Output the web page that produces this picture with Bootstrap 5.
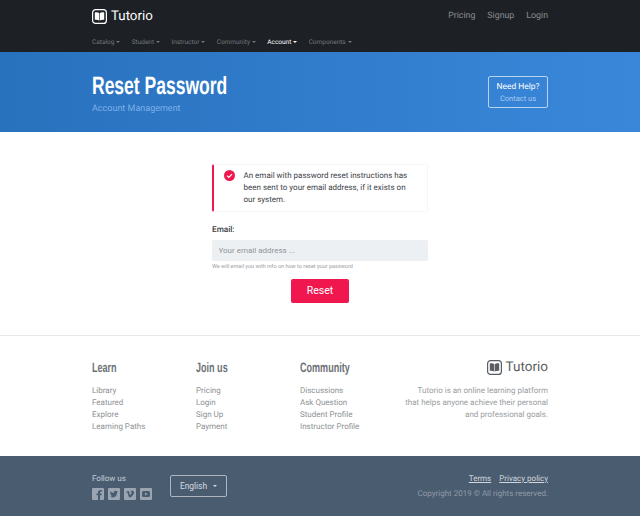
<!DOCTYPE html>
<html lang="en">
<head>
    <meta charset="UTF-8">
    <meta name="viewport" content="width=device-width, initial-scale=1.0">
    <title>Reset Password - Tutorio</title>
    <link href="https://cdn.jsdelivr.net/npm/bootstrap@5.3.0/dist/css/bootstrap.min.css" rel="stylesheet">
    <style>
        body {
            font-family: Roboto, "Liberation Sans", sans-serif;
            font-size: 8px;
            color: #383b3d;
            background: #fff;
            height: 516px;
            overflow: hidden;
            text-rendering: geometricPrecision;
        }

        .wrap {
            width: 456px;
            margin: 0 auto;
        }

        .top-dark {
            background: #1d2126;
            height: 52px;
        }

        .brand-row {
            height: 32px;
            padding-top: 1px;
        }

        .brand-name {
            font-size: 13.3px;
            color: #fff;
            line-height: 1;
        }

        .brand-links {
            gap: 12px;
        }

        .brand-link {
            color: #8a8d90;
            font-size: 8.8px;
            text-decoration: none;
        }

        .menu-row {
            height: 20px;
            padding-top: 1px;
            gap: 11.3px;
        }

        .menu-link {
            color: #73777b;
            font-size: 6.5px;
            text-decoration: none;
        }

        .menu-link.on {
            color: #fff;
        }

        .caret-mini {
            display: inline-block;
            width: 0;
            height: 0;
            margin-left: 2px;
            vertical-align: 1px;
            border-top: 2px solid currentColor;
            border-left: 2px solid transparent;
            border-right: 2px solid transparent;
        }

        .hero {
            height: 80px;
            background: linear-gradient(90deg, #2871bd 0%, #3a87da 100%);
        }

        .hero-text {
            padding-top: 4px;
        }

        .hero-title {
            font-family: "Liberation Sans", sans-serif;
            font-size: 25px;
            font-weight: 700;
            color: #fff;
            line-height: 1;
            margin: 0 0 6px;
            transform: scaleX(.7);
            transform-origin: left center;
            white-space: nowrap;
        }

        .hero-sub {
            color: #7db0e6;
            font-size: 9px;
            line-height: 1;
        }

        .help-btn {
            width: 60px;
            height: 32px;
            border: 1px solid #b6d3f2;
            border-radius: 2px;
            color: #fff;
            font-size: 8.4px;
            line-height: 11px;
            padding: 1px 0 0;
            text-decoration: none;
        }

        .help-btn span {
            color: #a5c9f0;
            font-size: 7.5px;
        }

        .main-area {
            height: 203px;
            padding-top: 32px;
        }

        .form-box {
            width: 216px;
            margin: 0 auto;
        }

        .notice {
            height: 48px;
            border: 1px solid #f6f6f7;
            border-left: 2px solid #f0174f;
            border-radius: 2px;
            padding: 5px 12px 0 10px;
            gap: 8.5px;
            font-size: 8px;
            line-height: 12px;
            color: #3c4248;
        }

        .notice svg {
            flex: none;
        }

        .field-label {
            font-size: 8.2px;
            font-weight: 500;
            color: #383b3d;
            margin: 13px 0 4px;
            line-height: 11px;
        }

        .email-input.form-control {
            height: 21px;
            background: #edf0f2;
            border: 0;
            border-radius: 2px;
            font-size: 8px;
            padding: 0 6.5px;
            color: #383b3d;
        }

        .email-input::placeholder {
            color: #8f9499;
        }

        .hint {
            font-size: 5.5px;
            color: #9a9ea3;
            line-height: 7px;
            margin: 3px 0 8px;
        }

        .reset-btn.btn {
            display: block;
            width: 58px;
            height: 24px;
            margin: 0 auto;
            padding: 0;
            background: #f0174f;
            border: 0;
            border-radius: 2px;
            color: #fff;
            font-size: 10.5px;
        }

        .links-area {
            height: 121px;
            border-top: 1px solid #e6e8ea;
            padding-top: 24px;
        }

        .col-title {
            font-family: "Liberation Sans", sans-serif;
            font-size: 13.5px;
            font-weight: 700;
            color: #6c7176;
            line-height: 16px;
            margin: 0 0 9px;
            transform: scaleX(.67);
            transform-origin: left center;
            white-space: nowrap;
        }

        .col-a {
            width: 104px;
            flex: none;
        }

        .col-link {
            display: block;
            color: #8d9195;
            font-size: 8px;
            line-height: 12px;
            text-decoration: none;
        }

        .about-name {
            font-size: 13.5px;
            color: #5a5e62;
            line-height: 1;
        }

        .about-text {
            color: #9a9da1;
            font-size: 8px;
            line-height: 12px;
            text-align: right;
            margin: 10px 0 0;
        }

        .foot {
            height: 60px;
            background: #4a5c70;
        }

        .follow {
            color: #c5ccd4;
            font-size: 8px;
            line-height: 11px;
            margin-bottom: 4px;
        }

        .social-gap {
            gap: 4px;
        }

        .foot-left {
            gap: 18px;
        }

        .lang-btn {
            width: 57px;
            height: 22px;
            border: 1px solid #aeb6bf;
            border-radius: 2px;
            color: #d7dce1;
            font-size: 8.4px;
            background: transparent;
            padding: 0;
        }

        .lang-btn.dropdown-toggle::after {
            margin-left: 6px;
            border-top-width: 2.500px;
            border-left-width: 2.500px;
            border-right-width: 2.500px;
        }

        .foot-links {
            gap: 8px;
            margin-bottom: 4px;
        }

        .foot-link {
            color: #cfd5db;
            font-size: 8px;
            line-height: 11px;
            text-decoration: underline;
        }

        .copy {
            color: #8f9ba8;
            font-size: 8px;
            line-height: 11px;
        }
    </style>
</head>

<body>
    <!-- Header -->
    <div class="top-dark">
        <div class="wrap">
            <div class="brand-row d-flex align-items-center justify-content-between">
                <div class="d-flex align-items-center gap-1">
                    <svg width="15" height="15" viewBox="0 0 15 15">
                        <rect x=".6" y=".6" width="13.8" height="13.8" rx="3" fill="none" stroke="#fff" stroke-width="1.2"/>
                        <path d="M2.800 3.400c1.700-.3 3.500 0 4.400.8v7.400c-1-.8-2.700-1-4.400-.8zM12.200 3.400c-1.700-.3-3.500 0-4.400.8v7.400c1-.8 2.700-1 4.400-.8z" fill="#fff"/>
                    </svg>
                    <span class="brand-name">Tutorio</span>
                </div>
                <div class="brand-links d-flex">
                    <a class="brand-link" href="#">Pricing</a>
                    <a class="brand-link" href="#">Signup</a>
                    <a class="brand-link" href="#">Login</a>
                </div>
            </div>
            <div class="menu-row d-flex align-items-center">
                <a class="menu-link" href="#">Catalog<i class="caret-mini"></i></a>
                <a class="menu-link" href="#">Student<i class="caret-mini"></i></a>
                <a class="menu-link" href="#">Instructor<i class="caret-mini"></i></a>
                <a class="menu-link" href="#">Community<i class="caret-mini"></i></a>
                <a class="menu-link on" href="#">Account<i class="caret-mini"></i></a>
                <a class="menu-link" href="#">Components<i class="caret-mini"></i></a>
            </div>
        </div>
    </div>

    <!-- Page title -->
    <div class="hero">
        <div class="wrap h-100 d-flex align-items-center justify-content-between">
            <div class="hero-text">
                <h1 class="hero-title">Reset Password</h1>
                <div class="hero-sub">Account Management</div>
            </div>
            <a class="help-btn d-flex flex-column align-items-center justify-content-center" href="#">
                Need Help?
                <span>Contact us</span>
            </a>
        </div>
    </div>

    <!-- Form -->
    <div class="main-area">
        <form class="form-box">
            <div class="notice d-flex">
                <svg width="11" height="11" viewBox="0 0 11 11">
                    <circle cx="5.500" cy="5.500" r="5.500" fill="#f0174f"/>
                    <path d="M3 5.600l1.800 1.800L8 4.100" fill="none" stroke="#fff" stroke-width="1.200"/>
                </svg>
                <div>An email with password reset instructions has been sent to your email address, if it exists on our system.</div>
            </div>
            <div class="field-label">Email:</div>
            <input class="email-input form-control" type="text" placeholder="Your email address ...">
            <div class="hint">We will email you with info on how to reset your password</div>
            <button class="reset-btn btn" type="button">Reset</button>
        </form>
    </div>

    <!-- Footer links -->
    <div class="links-area">
        <div class="wrap d-flex">
            <div class="col-a">
                <h4 class="col-title">Learn</h4>
                <a class="col-link" href="#">Library</a>
                <a class="col-link" href="#">Featured</a>
                <a class="col-link" href="#">Explore</a>
                <a class="col-link" href="#">Learning Paths</a>
            </div>
            <div class="col-a">
                <h4 class="col-title">Join us</h4>
                <a class="col-link" href="#">Pricing</a>
                <a class="col-link" href="#">Login</a>
                <a class="col-link" href="#">Sign Up</a>
                <a class="col-link" href="#">Payment</a>
            </div>
            <div class="col-a">
                <h4 class="col-title">Community</h4>
                <a class="col-link" href="#">Discussions</a>
                <a class="col-link" href="#">Ask Question</a>
                <a class="col-link" href="#">Student Profile</a>
                <a class="col-link" href="#">Instructor Profile</a>
            </div>
            <div class="flex-grow-1">
                <div class="d-flex align-items-center justify-content-end gap-1">
                    <svg width="15" height="15" viewBox="0 0 15 15">
                        <rect x=".6" y=".6" width="13.8" height="13.8" rx="3" fill="none" stroke="#5a5e62" stroke-width="1.2"/>
                        <path d="M2.800 3.400c1.700-.3 3.500 0 4.400.8v7.400c-1-.8-2.700-1-4.400-.8zM12.200 3.400c-1.700-.3-3.500 0-4.400.8v7.400c1-.8 2.700-1 4.400-.8z" fill="#5a5e62"/>
                    </svg>
                    <span class="about-name">Tutorio</span>
                </div>
                <p class="about-text">Tutorio is an online learning platform that helps anyone achieve their personal and professional goals.</p>
            </div>
        </div>
    </div>

    <!-- Footer bar -->
    <div class="foot">
        <div class="wrap h-100 d-flex align-items-center justify-content-between">
            <div class="foot-left d-flex align-items-center">
                <div>
                    <div class="follow">Follow us</div>
                    <div class="social-gap d-flex">
                        <svg width="12" height="12" viewBox="0 0 12 12"><rect width="12" height="12" rx="1" fill="#9aa5b1"/><path d="M8 12V7.200h1.500L9.800 5.500H8V4.500c0-.5.2-.8.800-.8h1V2.100H8.500C7 2.100 6 3 6 4.400v1.100H4.500v1.700H6V12z" fill="#4a5c70"/></svg>
                        <svg width="12" height="12" viewBox="0 0 12 12"><rect width="12" height="12" rx="1" fill="#9aa5b1"/><path d="M10 3.600c-.3.100-.6.200-1 .3.400-.2.600-.6.800-1-.3.200-.7.300-1.100.4-.7-.8-2-.7-2.600.1-.3.400-.4 1-.3 1.500C4.400 4.800 3.200 4.200 2.400 3.200c-.4.800-.2 1.700.5 2.200-.3 0-.5-.1-.7-.2 0 .8.600 1.500 1.300 1.700-.2.100-.5.100-.7 0 .2.700.8 1.100 1.500 1.200-.7.500-1.500.8-2.400.7 2.600 1.600 6 .3 6.900-2.600.1-.5.200-1 .2-1.500.4-.1.700-.5 1-.9z" fill="#4a5c70"/></svg>
                        <svg width="12" height="12" viewBox="0 0 12 12"><rect width="12" height="12" rx="1" fill="#9aa5b1"/><path d="M2 4.300l.5.600c.5-.3.800-.5 1-.2.400.6.800 3.300 1.500 4.300.7.900 1.600.500 2.700-.5 1-.9 2.400-2.600 2.500-4.200C9.800 2.500 8.200 2.300 7.200 3c-.4.300-.7.800-.8 1.200.8-.4 1.300-.2 1.200.6-.1.800-1 2.100-1.500 2.100-.4 0-.7-2.100-1-3.200C4.800 2.500 3.800 3 2 4.300z" fill="#4a5c70"/></svg>
                        <svg width="12" height="12" viewBox="0 0 12 12"><rect width="12" height="12" rx="1" fill="#9aa5b1"/><rect x="2" y="3" width="8" height="6" rx="1.500" fill="#4a5c70"/><path d="M5 4.500v3L7.500 6z" fill="#9aa5b1"/></svg>
                    </div>
                </div>
                <button class="lang-btn dropdown-toggle" type="button">English</button>
            </div>
            <div class="text-end">
                <div class="foot-links d-flex justify-content-end">
                    <a class="foot-link" href="#">Terms</a>
                    <a class="foot-link" href="#">Privacy policy</a>
                </div>
                <div class="copy">Copyright 2019 © All rights reserved.</div>
            </div>
        </div>
    </div>

    <script src="https://cdn.jsdelivr.net/npm/bootstrap@5.3.0/dist/js/bootstrap.bundle.min.js"></script>
</body>

</html>
